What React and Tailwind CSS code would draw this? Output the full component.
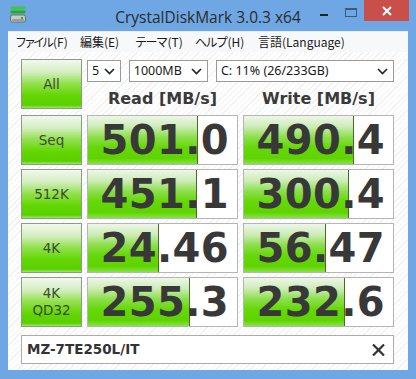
import React from "react";

const rows = [
  { label: ["Seq"], read: "501.0", rw: 110, write: "490.4", ww: 110 },
  { label: ["512K"], read: "451.1", rw: 109, write: "300.4", ww: 105 },
  { label: ["4K"], read: "24.46", rw: 71, write: "56.47", ww: 82 },
  { label: ["4K", "QD32"], read: "255.3", rw: 102, write: "232.6", ww: 101 },
];

function Chevron() {
  return (
    <svg width="11" height="7" viewBox="0 0 11 7" className="shrink-0">
      <path d="M1 1 L5.5 5.5 L10 1" fill="none" stroke="#222" strokeWidth="1.6" />
    </svg>
  );
}

function Select({ w, text }) {
  return (
    <div
      className={`${w} h-[22px] bg-white border border-[#9a9a9a] flex items-center justify-between pl-[4px] pr-[5px] text-[12.5px] text-[#1a1a1a]`}
      style={{ fontFamily: '"Noto Sans", "DejaVu Sans", sans-serif' }}
    >
      <span className="leading-none">{text}</span>
      <Chevron />
    </div>
  );
}

function GreenButton({ lines }) {
  return (
    <div className="h-[50px] border border-[#8d9c86] bg-[linear-gradient(to_bottom,#f2f8ee_0%,#d4eec0_25%,#8fe04a_50%,#62d600_75%,#5ad000_94%,#9ae860_100%)] flex flex-col items-center justify-center text-[13.5px] leading-[17px] text-[#3c4a30]"
      style={{ fontFamily: '"DejaVu Sans", Verdana, sans-serif' }}>
      {lines.map((l) => (
        <span key={l}>{l}</span>
      ))}
    </div>
  );
}

function Value({ text, w }) {
  return (
    <div className="relative h-[50px] border border-[#b5b5b5] bg-white overflow-hidden">
      <div
        className="absolute left-0 top-0 bottom-0 bg-[linear-gradient(to_bottom,#eef6ea_0%,#cdecb6_22%,#8ade48_45%,#66d80a_65%,#5fd400_88%,#86e24a_100%)] border-r border-[#4a6a30]"
        style={{ width: w }}
      />
      <div
        className="relative h-full flex items-center justify-end pr-[8px] text-[40px] font-bold text-[#383838] tracking-[0.4px]"
        style={{ fontFamily: '"DejaVu Sans", Verdana, sans-serif' }}
      >
        {text}
      </div>
    </div>
  );
}

export default function App() {
  const jp = {
    fontFamily: '"Noto Sans CJK JP", "Noto Sans", sans-serif',
  };
  return (
    <div className="w-[416px] h-[379px] bg-[#6ea7e3] flex flex-col overflow-hidden">
      {/* Title bar */}
      <div className="h-[31px] flex items-start relative shrink-0">
        <div className="pl-[10px] pt-[6px]">
          <svg width="16" height="17" viewBox="0 0 16 17">
            <rect x="0.5" y="0.5" width="15" height="3" rx="1" fill="#3cc83c" />
            <rect x="0.5" y="4.5" width="15" height="3" rx="1" fill="#2aa82a" />
            <rect x="0.5" y="9" width="15" height="7" rx="2" fill="#c8ccc8" stroke="#6a706a" strokeWidth="1" />
            <rect x="2" y="13" width="12" height="2" fill="#9aa09a" />
            <rect x="11" y="11" width="2" height="2" fill="#2aa82a" />
          </svg>
        </div>
        <div
          className="absolute left-0 right-0 top-[6px] text-center text-[15.5px] text-[#2b2b2b]"
          style={{ fontFamily: '"Open Sans", "Noto Sans", sans-serif' }}
        >
          CrystalDiskMark 3.0.3 x64
        </div>
        <div className="ml-auto flex items-start relative">
          <div className="w-[8px] h-[2px] bg-[#222] mt-[14px] mr-[17px]" />
          <div className="w-[12px] h-[9px] border border-[#3a5a80] border-t-2 mt-[8px] mr-[7px]" />
          <div className="w-[45px] h-[21px] bg-[#c9504a] flex items-center justify-center mr-[7px]">
            <svg width="10" height="10" viewBox="0 0 10 10">
              <path d="M1 1 L9 9 M9 1 L1 9" stroke="#fff" strokeWidth="2" />
            </svg>
          </div>
        </div>
      </div>

      {/* Client */}
      <div className="mx-[8px] h-[339px] flex flex-col bg-white">
        {/* Menu */}
        <div
          className="h-[21px] shrink-0 bg-[#f7f8f9] flex items-center pl-[7px] text-[12px] text-[#1a1a1a] border-t border-[#e8eef5] whitespace-nowrap"
          style={jp}
        >
          <span className="w-[65px]"><span className="tracking-[-3px]">ファイル</span><span className="pl-[2px]">(F)</span></span>
          <span className="w-[55px]">編集(E)</span>
          <span className="w-[60px]"><span className="tracking-[-1.5px]">テーマ</span><span className="pl-[1px]">(T)</span></span>
          <span className="w-[63px]"><span className="tracking-[-1.5px]">ヘルプ</span><span className="pl-[1px]">(H)</span></span>
          <span>言語(Language)</span>
        </div>

        {/* Body */}
        <div className="flex-1 bg-[repeating-linear-gradient(135deg,#ffffff_0px,#ffffff_3px,#f1f1f1_3px,#f1f1f1_4px)] pl-[13px] pt-[7px]">
          <div className="grid grid-cols-[61px_151px_151px] gap-x-[5px] gap-y-[4px]">
            <GreenButton lines={["All"]} />
            <div className="col-span-2 flex flex-col">
              <div className="flex gap-[8px] mt-[1px]">
                <Select w="w-[34px]" text="5" />
                <Select w="w-[80px]" text="1000MB" />
                <Select w="w-[180px]" text="C: 11% (26/233GB)" />
              </div>
              <div
                className="flex mt-[5px] text-[16px] font-bold text-[#3a3a3a]"
                style={{ fontFamily: '"DejaVu Sans", Verdana, sans-serif' }}
              >
                <div className="w-[151px] text-center">Read [MB/s]</div>
                <div className="w-[5px]" />
                <div className="w-[151px] text-center">Write [MB/s]</div>
              </div>
            </div>
            {rows.map((r) => (
              <React.Fragment key={r.read}>
                <GreenButton lines={r.label} />
                <Value text={r.read} w={r.rw} />
                <Value text={r.write} w={r.ww} />
              </React.Fragment>
            ))}
          </div>

          <div className="mt-[8px] w-[373px] h-[29px] bg-white border border-[#ababab] flex items-center justify-between pl-[5px] pr-[8px]">
            <span
              className="text-[13.5px] font-bold text-[#333]"
              style={{ fontFamily: '"DejaVu Sans", Verdana, sans-serif' }}
            >
              MZ-7TE250L/IT
            </span>
            <svg width="13" height="12" viewBox="0 0 13 12">
              <path d="M1 0.5 L12 11.5 M12 0.5 L1 11.5" stroke="#333" strokeWidth="2.2" />
            </svg>
          </div>
        </div>
      </div>
    </div>
  );
}
